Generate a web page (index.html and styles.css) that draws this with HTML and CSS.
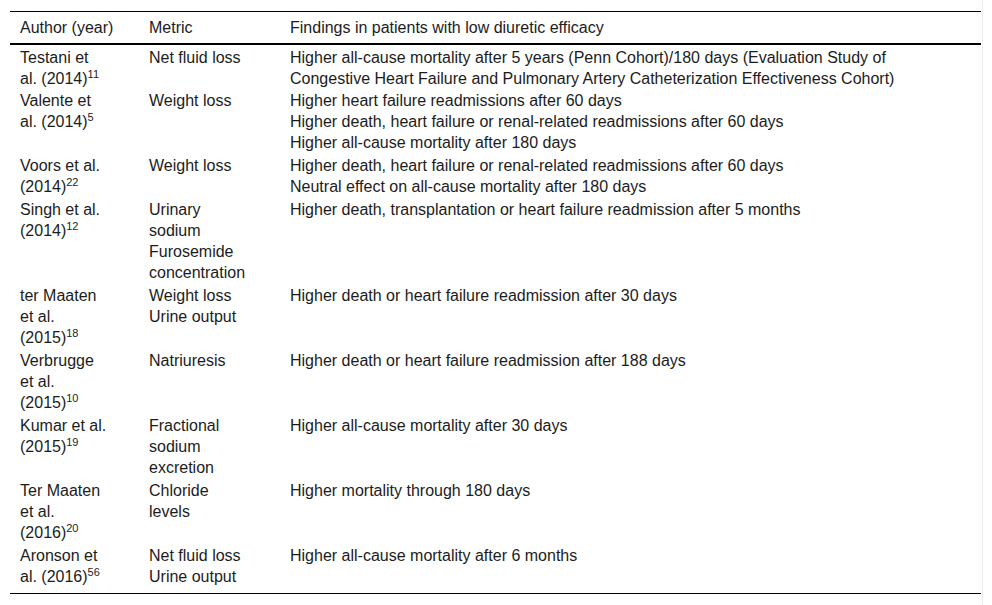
FILE: index.html
```html
<!DOCTYPE html>
<html>
<head>
<meta charset="utf-8">
<link rel="stylesheet" href="styles.css">
</head>
<body>
<div class="wrap">
<table class="tbl">
<colgroup><col class="c1"><col class="c2"><col class="c3"></colgroup>
<thead>
<tr><th>Author (year)</th><th>Metric</th><th>Findings in patients with low diuretic efficacy</th></tr>
</thead>
<tbody>
<tr><td>Testani et al. (2014)<sup>11</sup></td><td>Net fluid loss</td><td>Higher all-cause mortality after 5 years (Penn Cohort)/180 days (Evaluation Study of Congestive Heart Failure and Pulmonary Artery Catheterization Effectiveness Cohort)</td></tr>
<tr><td>Valente et al. (2014)<sup>5</sup></td><td>Weight loss</td><td>Higher heart failure readmissions after 60 days<br>Higher death, heart failure or renal-related readmissions after 60 days<br>Higher all-cause mortality after 180 days</td></tr>
<tr><td>Voors et al. (2014)<sup>22</sup></td><td>Weight loss</td><td>Higher death, heart failure or renal-related readmissions after 60 days<br>Neutral effect on all-cause mortality after 180 days</td></tr>
<tr><td>Singh et al. (2014)<sup>12</sup></td><td>Urinary sodium<br>Furosemide concentration</td><td>Higher death, transplantation or heart failure readmission after 5 months</td></tr>
<tr><td>ter Maaten et al. (2015)<sup>18</sup></td><td>Weight loss<br>Urine output</td><td>Higher death or heart failure readmission after 30 days</td></tr>
<tr><td>Verbrugge et al. (2015)<sup>10</sup></td><td>Natriuresis</td><td>Higher death or heart failure readmission after 188 days</td></tr>
<tr><td>Kumar et al. (2015)<sup>19</sup></td><td>Fractional sodium excretion</td><td>Higher all-cause mortality after 30 days</td></tr>
<tr><td>Ter Maaten et al. (2016)<sup>20</sup></td><td>Chloride levels</td><td>Higher mortality through 180 days</td></tr>
<tr><td>Aronson et al. (2016)<sup>56</sup></td><td>Net fluid loss<br>Urine output</td><td>Higher all-cause mortality after 6 months</td></tr>
</tbody>
</table>
</div>
</body>
</html>
```
FILE: styles.css
```css
html, body {
  margin: 0;
  padding: 0;
  background: #fff;
}
body {
  font-family: "Liberation Sans", Arial, sans-serif;
  font-size: 16px;
  line-height: 21px;
  color: #1c1c1c;
}
.wrap {
  padding: 11px 1px 10px 10px;
  width: 983px;
  min-height: 100vh;
  box-sizing: border-box;
  border-right: 1px solid #ececec;
}
.tbl {
  width: 971px;
  border-collapse: collapse;
  table-layout: fixed;
  border-top: 1px solid #000;
  border-bottom: 1px solid #000;
}
.c1 { width: 129px; }
.c2 { width: 141px; }
.tbl th {
  font-weight: normal;
  text-align: left;
  vertical-align: top;
  white-space: nowrap;
  padding: 5px 10px 5px 10px;
  border-bottom: 2px solid #000;
}
.tbl td {
  text-align: left;
  vertical-align: top;
  padding: 1px 30px 1px 10px;
}
.tbl tbody tr:first-child td { padding-top: 2px; }
.tbl tbody tr:nth-child(2) td { padding-top: 0; }
.tbl tbody tr:last-child td { padding-bottom: 6px; }
sup {
  font-size: 11px;
  line-height: 0;
  vertical-align: 6px;
}
```
